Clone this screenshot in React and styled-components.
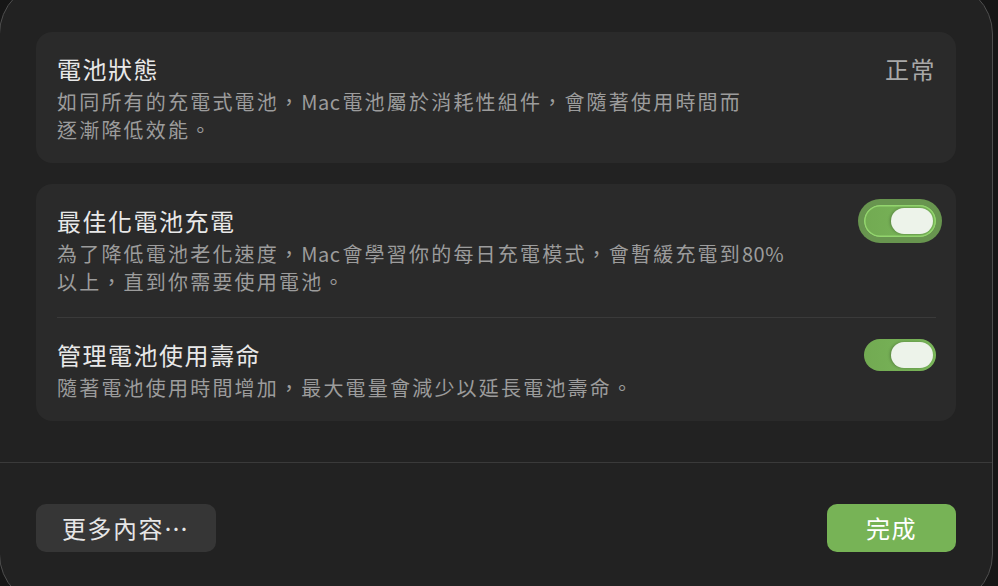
import React from "react";
import styled, { createGlobalStyle } from "styled-components";

const Global = createGlobalStyle`
  html, body { margin: 0; padding: 0; background: #161616; }
  body { font-family: "Noto Sans CJK TC", "Noto Sans", sans-serif; -webkit-font-smoothing: antialiased; }
`;

const Screen = styled.div`
  width: 998px;
  height: 586px;
  overflow: hidden;
  background: #161616;
`;

const Window = styled.div`
  box-sizing: border-box;
  width: 994px;
  height: 624px;
  margin: -18px 0 0 -1px;
  background: #222222;
  border: 1px solid #4e4e4e;
  border-radius: 52px;
  display: flex;
  flex-direction: column;
`;

const Content = styled.div`
  display: flex;
  flex-direction: column;
  gap: 21px;
  padding: 49px 36px 41px;
`;

const Card = styled.div`
  background: #2a2a2a;
  border-radius: 16px;
  padding: 0 20px 0 21px;
  display: flex;
  flex-direction: column;
`;

const Row = styled.div`
  display: flex;
  align-items: flex-start;
  justify-content: space-between;
  padding: 22px 0 19px;
  & + & {
    border-top: 1px solid #3a3a3a;
    padding-top: 22px;
  }
  &:not(:last-child) {
    padding-bottom: 21px;
  }
`;

const TextCol = styled.div`
  display: flex;
  flex-direction: column;
  gap: 4px;
`;

const Title = styled.div`
  font-size: 24px;
  line-height: 30px;
  font-weight: 400;
  letter-spacing: 1.5px;
  color: #e8e8e8;
`;

const Desc = styled.div`
  display: flex;
  flex-direction: column;
  font-size: 20px;
  line-height: 28px;
  letter-spacing: 2.2px;
  color: #9c9c9c;
`;

const DescLine = styled.div`
  white-space: nowrap;
`;

const Latin = styled.span`
  letter-spacing: 0.5px;
  margin-right: 2px;
`;

const Status = styled.div`
  font-size: 24px;
  line-height: 30px;
  letter-spacing: 1.5px;
  color: #a8a8a8;
`;

const ToggleWrap = styled.div`
  height: 30px;
  display: flex;
  align-items: center;
`;

const Track = styled.div`
  box-sizing: border-box;
  width: 72px;
  height: 32px;
  border-radius: 16px;
  background: linear-gradient(90deg, #72aa52, #7ab75a);
  padding: 3px;
  display: flex;
  justify-content: flex-end;
  box-shadow: ${(p) =>
    p.$focus ? "inset 0 0 0 1.5px #93d56e, 0 0 0 6px #68954f" : "none"};
`;

const Knob = styled.div`
  width: 42px;
  height: 26px;
  border-radius: 13px;
  background: #edf3ea;
  box-shadow: -1px 0 3px rgba(0, 0, 0, 0.25);
`;

const Footer = styled.div`
  border-top: 1px solid #3a3a3a;
  padding: 41px 36px 0;
  display: flex;
  justify-content: space-between;
`;

const Button = styled.button`
  height: 48px;
  border: none;
  border-radius: 10px;
  padding: 0 ${(p) => (p.$primary ? 39 : 26)}px;
  background: ${(p) => (p.$primary ? "#77b356" : "#363636")};
  color: ${(p) => (p.$primary ? "#ffffff" : "#e6e6e6")};
  font-family: "Noto Sans CJK TC", sans-serif;
  font-size: 24px;
  letter-spacing: 1.5px;
  line-height: 48px;
  font-weight: 400;
`;

function Toggle({ focus }) {
  return (
    <ToggleWrap>
      <Track $focus={focus}>
        <Knob />
      </Track>
    </ToggleWrap>
  );
}

export default function App() {
  return (
    <Screen>
      <Global />
      <Window>
        <Content>
          <Card>
            <Row>
              <TextCol>
                <Title>電池狀態</Title>
                <Desc>
                  <DescLine>
                    如同所有的充電式電池，<Latin>Mac</Latin>電池屬於消耗性組件，會隨著使用時間而
                  </DescLine>
                  <DescLine>逐漸降低效能。</DescLine>
                </Desc>
              </TextCol>
              <Status>正常</Status>
            </Row>
          </Card>
          <Card>
            <Row>
              <TextCol>
                <Title>最佳化電池充電</Title>
                <Desc>
                  <DescLine>
                    為了降低電池老化速度，<Latin>Mac</Latin>會學習你的每日充電模式，會暫緩充電到<Latin>80%</Latin>
                  </DescLine>
                  <DescLine>以上，直到你需要使用電池。</DescLine>
                </Desc>
              </TextCol>
              <Toggle focus />
            </Row>
            <Row>
              <TextCol>
                <Title>管理電池使用壽命</Title>
                <Desc>
                  <DescLine>隨著電池使用時間增加，最大電量會減少以延長電池壽命。</DescLine>
                </Desc>
              </TextCol>
              <Toggle />
            </Row>
          </Card>
        </Content>
        <Footer>
          <Button>更多內容⋯</Button>
          <Button $primary>完成</Button>
        </Footer>
      </Window>
    </Screen>
  );
}
